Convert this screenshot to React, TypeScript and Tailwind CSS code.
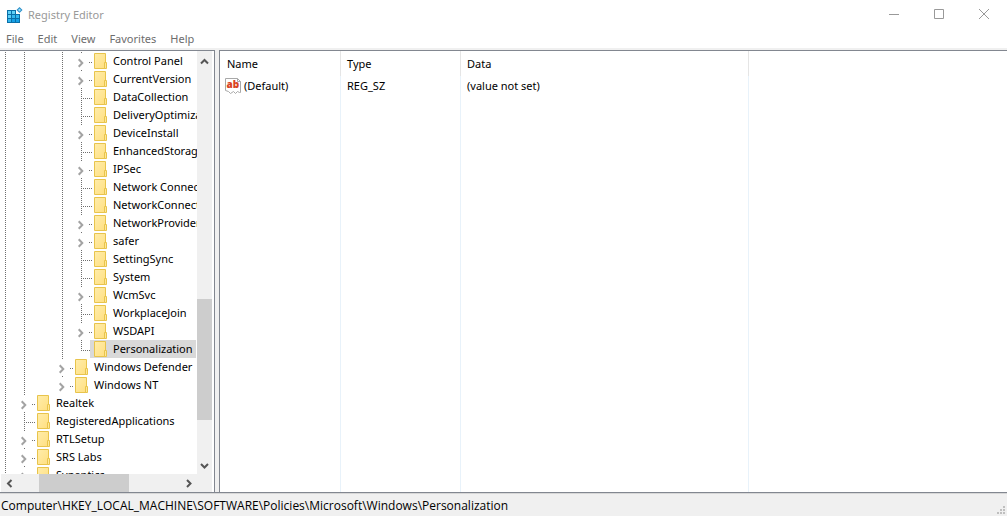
import React from "react";

type TreeItem = {
  name: string;
  depth: 1 | 3 | 4;
  expandable?: boolean;
  selected?: boolean;
  last?: boolean;
};

const items: TreeItem[] = [
  { name: "Control Panel", depth: 4, expandable: true },
  { name: "CurrentVersion", depth: 4, expandable: true },
  { name: "DataCollection", depth: 4 },
  { name: "DeliveryOptimization", depth: 4 },
  { name: "DeviceInstall", depth: 4, expandable: true },
  { name: "EnhancedStorageDevices", depth: 4 },
  { name: "IPSec", depth: 4, expandable: true },
  { name: "Network Connections", depth: 4 },
  { name: "NetworkConnectivityStatusIndicator", depth: 4 },
  { name: "NetworkProvider", depth: 4, expandable: true },
  { name: "safer", depth: 4, expandable: true },
  { name: "SettingSync", depth: 4 },
  { name: "System", depth: 4 },
  { name: "WcmSvc", depth: 4, expandable: true },
  { name: "WorkplaceJoin", depth: 4 },
  { name: "WSDAPI", depth: 4, expandable: true },
  { name: "Personalization", depth: 4, selected: true, last: true },
  { name: "Windows Defender", depth: 3, expandable: true },
  { name: "Windows NT", depth: 3, expandable: true },
  { name: "Realtek", depth: 1, expandable: true },
  { name: "RegisteredApplications", depth: 1 },
  { name: "RTLSetup", depth: 1, expandable: true },
  { name: "SRS Labs", depth: 1, expandable: true },
  { name: "Synaptics", depth: 1, expandable: true },
];

const menus = ["File", "Edit", "View", "Favorites", "Help"];

/* Ancestor levels whose branch continues below the row; level 2 has no more siblings. */
const guideLevels = [0, 1, 2, 3];

function Guide({ visible }: { visible: boolean }) {
  return (
    <svg width="19" height="18" className="shrink-0" aria-hidden="true">
      {visible && <path d="M4.5 0V18" stroke="#6f6f6f" strokeDasharray="1 1" />}
    </svg>
  );
}

function Connector({ expandable, last }: { expandable?: boolean; last?: boolean }) {
  return (
    <svg width="13" height="18" className="shrink-0 overflow-visible" aria-hidden="true">
      {expandable ? (
        <>
          <path d="M4.5 0V1M12 10.5H13M14 10.5H15" stroke="#6f6f6f" />
          <path d="M1.7 7.2L5.3 11L1.7 14.8" fill="none" stroke="#a3a3a3" strokeWidth="2" />
        </>
      ) : (
        <>
          <path d={last ? "M4.5 0V11" : "M4.5 0V18"} stroke="#6f6f6f" strokeDasharray="1 1" />
          <path d="M6 10.5H15" stroke="#6f6f6f" strokeDasharray="1 1" />
        </>
      )}
    </svg>
  );
}

function Folder() {
  return (
    <svg width="13" height="18" className="shrink-0" aria-hidden="true">
      <defs>
        <linearGradient id="folder" x1="0" y1="0" x2="1" y2="1">
          <stop offset="0" stopColor="#ffedab" />
          <stop offset="1" stopColor="#ffdf80" />
        </linearGradient>
      </defs>
      <path d="M0.5 1.5H11.5V16.5H0.5Z" fill="url(#folder)" stroke="#e8c44c" />
      <path d="M10.5 10.5H12.5V16.5H10.5Z" fill="#ffe797" stroke="#e8c44c" />
    </svg>
  );
}

function TreeRow({ item }: { item: TreeItem }) {
  return (
    <li className="flex h-[18px] min-w-max">
      {guideLevels.slice(0, item.depth).map((level) => (
        <Guide key={level} visible={level === 0 || (level === 1 && item.depth > 1) || level === 3} />
      ))}
      <Connector expandable={item.expandable} last={item.last} />
      <button
        className={`flex h-[18px] items-center pr-[3px] pl-1 ${item.selected ? "bg-[#d9d9d9]" : ""}`}
      >
        <Folder />
        <span className="pl-1.5 leading-[18px] whitespace-nowrap">{item.name}</span>
      </button>
    </li>
  );
}

function Arrow({ d, label, className }: { d: string; label: string; className: string }) {
  return (
    <button aria-label={label} className={`flex shrink-0 items-center justify-center ${className}`}>
      <svg width="9" height="9" fill="none" stroke="#555" strokeWidth="2" aria-hidden="true">
        <path d={d} />
      </svg>
    </button>
  );
}

function RegistryIcon() {
  return (
    <svg width="17" height="17" aria-hidden="true">
      <path d="M1 3H10V7H14V16H1Z" fill="#0a6fa8" />
      <path d="M2 4H5V7H2ZM6 4H9V7H6ZM2 8H5V11H2Z" fill="#5fd0f7" />
      <path d="M6 8H9V11H6ZM10 8H13V11H10ZM2 12H5V15H2Z" fill="#35b8ef" />
      <path d="M6 12H9V15H6ZM10 12H13V15H10Z" fill="#14a0e6" />
      <path d="M13.500 0L16.500 3L13.500 6L10.500 3Z" fill="#2a8fc8" />
      <path d="M13.500 1.500L15 3L13.500 4.500L12 3Z" fill="#9be0fa" />
    </svg>
  );
}

function StringValueIcon() {
  return (
    <svg width="16" height="16" className="shrink-0" aria-hidden="true">
      <path
        d="M0.500 0.500H12.500L15.500 3.500V14.500H14.500L12.500 13.500L10.500 15.500L8.500 13.500L5.500 15.500L3.500 13.500L0.500 12.500Z"
        fill="#fff"
        stroke="#a8a8a8"
      />
      <path d="M12.500 0.500V3.500H15.500" fill="none" stroke="#a8a8a8" />
      <text x="1.500" y="10" fontSize="10" fontWeight="800" fill="#d9431e" fontFamily="Open Sans, sans-serif">
        ab
      </text>
    </svg>
  );
}

function WindowButtons() {
  const button = "flex h-7 w-[45px] items-center justify-center";
  return (
    <div className="flex pr-px">
      <button aria-label="Minimize" className={button}>
        <svg width="10" height="10" stroke="#999"><path d="M0 5.5H10" /></svg>
      </button>
      <button aria-label="Maximize" className={button}>
        <svg width="10" height="10" fill="none" stroke="#999"><path d="M0.5 0.5H9.5V9.5H0.5Z" /></svg>
      </button>
      <button aria-label="Close" className={button}>
        <svg width="10" height="10" stroke="#999"><path d="M0 0L10 10M10 0L0 10" /></svg>
      </button>
    </div>
  );
}

function TreePane() {
  return (
    <aside className="flex w-[215px] shrink-0 border-t border-r border-[#828790] bg-white pr-0.5">
      <div className="flex min-w-0 flex-1 flex-col">
        <ul className="min-h-0 flex-1 overflow-hidden pt-px pl-px">
          {items.map((item) => (
            <TreeRow key={item.name} item={item} />
          ))}
        </ul>
        <div className="ml-px flex h-[18px] bg-[#f0f0f0]">
          <Arrow label="Scroll left" className="w-4" d="M6.5 1L3 4.5L6.5 8" />
          <div className="flex-1 px-[22px]">
            <div className="h-full w-[90px] bg-[#cdcdcd]" />
          </div>
          <Arrow label="Scroll right" className="w-[18px]" d="M3 1L6.5 4.5L3 8" />
        </div>
      </div>
      <div className="flex w-[15px] shrink-0 flex-col bg-[#f0f0f0]">
        <Arrow label="Scroll up" className="h-5" d="M1 6.5L4.5 3L8 6.5" />
        <div className="flex flex-1 flex-col">
          <div className="grow-[228]" />
          <div className="grow-[121] bg-[#cdcdcd]" />
          <div className="grow-[35]" />
        </div>
        <Arrow label="Scroll down" className="h-5" d="M1 3L4.5 6.5L8 3" />
        <div className="h-[17px]" />
      </div>
    </aside>
  );
}

function ValuePane() {
  const head = "border-r border-[#e5e5e5] pl-1.5 text-left font-normal";
  const cell = "border-r border-[#e8f2fa] pl-1.5";
  return (
    <section className="min-w-0 flex-1 border-t border-l border-[#828790] bg-white">
      <table className="h-full w-full table-fixed border-separate border-spacing-0">
        <colgroup>
          <col className="w-[121px]" />
          <col className="w-[120px]" />
          <col className="w-[288px]" />
          <col />
        </colgroup>
        <thead>
          <tr className="h-[25px]">
            <th className="border-r border-[#e5e5e5] pl-[7px] text-left font-normal">Name</th>
            <th className={head}>Type</th>
            <th className={head}>Data</th>
            <td />
          </tr>
        </thead>
        <tbody>
          <tr className="h-5">
            <td className="border-r border-[#e8f2fa] pl-[5px]">
              <div className="flex items-center gap-[3px]">
                <StringValueIcon />
                (Default)
              </div>
            </td>
            <td className={cell}>REG_SZ</td>
            <td className={cell}>(value not set)</td>
            <td />
          </tr>
          <tr>
            <td className={cell} />
            <td className={cell} />
            <td className={cell} />
            <td />
          </tr>
        </tbody>
      </table>
    </section>
  );
}

export default function App() {
  return (
    <div className="flex h-screen flex-col overflow-hidden bg-white font-['Noto_Sans',sans-serif] text-[11px] leading-4 text-black">
      <header className="flex h-[30px] shrink-0 items-start justify-between">
        <div className="flex h-[30px] items-center gap-[5px] pl-1.5 text-[#999]">
          <RegistryIcon />
          <h1>Registry Editor</h1>
        </div>
        <WindowButtons />
      </header>
      <nav className="flex h-[18px] shrink-0 items-center gap-3.5 pl-1.5 text-[#6d6d6d]">
        {menus.map((menu) => (
          <button key={menu}>{menu}</button>
        ))}
      </nav>
      <main className="flex min-h-0 flex-1 gap-1 border-b border-[#828790] bg-[#f0f0f0] pt-0.5">
        <TreePane />
        <ValuePane />
      </main>
      <footer className="flex h-[23px] shrink-0 items-center justify-between border-t border-[#d7d7d7] bg-[#f0f0f0] pt-0.5 pl-px font-['Open_Sans',sans-serif] text-[12px]">
        <span>Computer\HKEY_LOCAL_MACHINE\SOFTWARE\Policies\Microsoft\Windows\Personalization</span>
        <svg width="10" height="10" className="self-end" fill="#bfbfbf" aria-hidden="true">
          <path d="M6 0H8V2H6ZM3 3H5V5H3ZM6 3H8V5H6ZM0 6H2V8H0ZM3 6H5V8H3ZM6 6H8V8H6Z" />
        </svg>
      </footer>
    </div>
  );
}
